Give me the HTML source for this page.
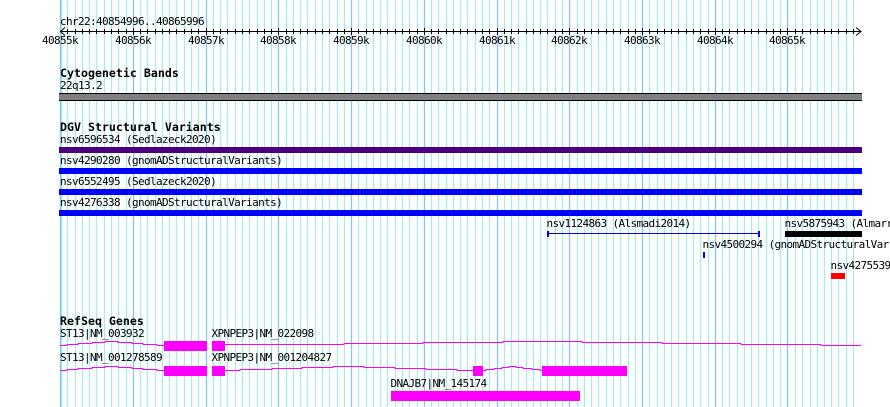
<!DOCTYPE html>
<html>
<head>
<meta charset="utf-8">
<style>
html,body{margin:0;padding:0;background:#fff;width:890px;height:407px;overflow:hidden}
svg{display:block}
text{font-family:"DejaVu Sans Mono","Liberation Mono",monospace;font-size:11px;letter-spacing:-0.62px;fill:#000;white-space:pre}
text.b{font-weight:bold;font-size:11.62px;letter-spacing:0}
</style>
</head>
<body>
<svg width="890" height="407" viewBox="0 0 890 407" xmlns="http://www.w3.org/2000/svg">
<g fill="none" stroke-width="1.3">
<path stroke="#a8ecec" d="M61.5 0V407M67.5 0V407M75.5 0V407M82.5 0V407M89.5 0V407M96.5 0V407M104.5 0V407M111.5 0V407M118.5 0V407M126.5 0V407M140.5 0V407M147.5 0V407M155.5 0V407M162.5 0V407M169.5 0V407M176.5 0V407M184.5 0V407M191.5 0V407M198.5 0V407M213.5 0V407M220.5 0V407M227.5 0V407M235.5 0V407M242.5 0V407M249.5 0V407M257.5 0V407M264.5 0V407M271.5 0V407M286.5 0V407M293.5 0V407M300.5 0V407M307.5 0V407M315.5 0V407M322.5 0V407M329.5 0V407M337.5 0V407M344.5 0V407M358.5 0V407M366.5 0V407M373.5 0V407M380.5 0V407M387.5 0V407M395.5 0V407M402.5 0V407M409.5 0V407M417.5 0V407M431.5 0V407M438.5 0V407M446.5 0V407M453.5 0V407M460.5 0V407M467.5 0V407M475.5 0V407M482.5 0V407M489.5 0V407M504.5 0V407M511.5 0V407M518.5 0V407M526.5 0V407M533.5 0V407M540.5 0V407M547.5 0V407M555.5 0V407M562.5 0V407M577.5 0V407M584.5 0V407M591.5 0V407M598.5 0V407M606.5 0V407M613.5 0V407M620.5 0V407M628.5 0V407M635.5 0V407M649.5 0V407M657.5 0V407M664.5 0V407M671.5 0V407M678.5 0V407M686.5 0V407M693.5 0V407M700.5 0V407M708.5 0V407M722.5 0V407M729.5 0V407M737.5 0V407M744.5 0V407M751.5 0V407M758.5 0V407M766.5 0V407M773.5 0V407M780.5 0V407M795.5 0V407M802.5 0V407M810.5 0V407M817.5 0V407M824.5 0V407M831.5 0V407M838.5 0V407M846.5 0V407M853.5 0V407"/>
<path stroke="#82c8f2" d="M60.5 0V407M133.5 0V407M206.5 0V407M278.5 0V407M351.5 0V407M424.5 0V407M497.5 0V407M569.5 0V407M642.5 0V407M715.5 0V407M787.5 0V407"/>
</g>
<g shape-rendering="crispEdges" fill="none">
<!-- ruler -->
<path stroke="#000" d="M60 31.5H861M67.5 29V34M75.5 29V34M82.5 29V34M89.5 29V34M96.5 29V34M104.5 29V34M111.5 29V34M118.5 29V34M126.5 29V34M133.5 28V35M140.5 29V34M147.5 29V34M155.5 29V34M162.5 29V34M169.5 29V34M176.5 29V34M184.5 29V34M191.5 29V34M198.5 29V34M206.5 28V35M213.5 29V34M220.5 29V34M227.5 29V34M235.5 29V34M242.5 29V34M249.5 29V34M257.5 29V34M264.5 29V34M271.5 29V34M278.5 28V35M286.5 29V34M293.5 29V34M300.5 29V34M307.5 29V34M315.5 29V34M322.5 29V34M329.5 29V34M337.5 29V34M344.5 29V34M351.5 28V35M358.5 29V34M366.5 29V34M373.5 29V34M380.5 29V34M387.5 29V34M395.5 29V34M402.5 29V34M409.5 29V34M417.5 29V34M424.5 28V35M431.5 29V34M438.5 29V34M446.5 29V34M453.5 29V34M460.5 29V34M467.5 29V34M475.5 29V34M482.5 29V34M489.5 29V34M497.5 28V35M504.5 29V34M511.5 29V34M518.5 29V34M526.5 29V34M533.5 29V34M540.5 29V34M547.5 29V34M555.5 29V34M562.5 29V34M569.5 28V35M577.5 29V34M584.5 29V34M591.5 29V34M598.5 29V34M606.5 29V34M613.5 29V34M620.5 29V34M628.5 29V34M635.5 29V34M642.5 28V35M649.5 29V34M657.5 29V34M664.5 29V34M671.5 29V34M678.5 29V34M686.5 29V34M693.5 29V34M700.5 29V34M708.5 29V34M715.5 28V35M722.5 29V34M729.5 29V34M737.5 29V34M744.5 29V34M751.5 29V34M758.5 29V34M766.5 29V34M773.5 29V34M780.5 29V34M787.5 28V35M795.5 29V34M802.5 29V34M810.5 29V34M817.5 29V34M824.5 29V34M831.5 29V34M838.5 29V34M846.5 29V34M853.5 29V34"/>
</g>
<path d="M65 27.5L60.5 31.5L65 35.5M856 27.5L861 31.5L856 35.5" fill="none" stroke="#000"/>

<g text-anchor="middle">
<text x="60" y="44">40855k</text>
<text x="133" y="44">40856k</text>
<text x="206" y="44">40857k</text>
<text x="278" y="44">40858k</text>
<text x="351" y="44">40859k</text>
<text x="424" y="44">40860k</text>
<text x="497" y="44">40861k</text>
<text x="569" y="44">40862k</text>
<text x="642" y="44">40863k</text>
<text x="715" y="44">40864k</text>
<text x="787" y="44">40865k</text>
</g>
<text x="60" y="25">chr22:40854996..40865996</text>

<text class="b" x="60" y="77">Cytogenetic Bands</text>
<text x="60" y="89">22q13.2</text>

<text class="b" x="60" y="131">DGV Structural Variants</text>
<text x="60" y="143">nsv6596534 (Sedlazeck2020)</text>
<text x="60" y="164">nsv4290280 (gnomADStructuralVariants)</text>
<text x="60" y="185">nsv6552495 (Sedlazeck2020)</text>
<text x="60" y="206">nsv4276338 (gnomADStructuralVariants)</text>
<text x="546.5" y="227">nsv1124863 (Alsmadi2014)</text>
<text x="784.5" y="227">nsv5875943 (Almarr</text>
<text x="702.5" y="248">nsv4500294 (gnomADStructuralVar</text>
<text x="830.5" y="269">nsv4275539</text>

<text class="b" x="60" y="325">RefSeq Genes</text>
<text x="60" y="337">ST13|NM_003932</text>
<text x="211.5" y="337">XPNPEP3|NM_022098</text>
<text x="60" y="361">ST13|NM_001278589</text>
<text x="211.5" y="361">XPNPEP3|NM_001204827</text>
<text x="390.5" y="387">DNAJB7|NM_145174</text>

<g shape-rendering="crispEdges">
<!-- cytoband -->
<rect x="59" y="93" width="803" height="8" fill="#000"/>
<rect x="59" y="94" width="803" height="6" fill="#808080"/>
<!-- DGV bars -->
<rect x="59" y="147" width="803" height="6" fill="#4b0082"/>
<rect x="59" y="168" width="803" height="6" fill="#0000ff"/>
<rect x="59" y="189" width="803" height="6" fill="#0000ff"/>
<rect x="59" y="210" width="803" height="6" fill="#0000ff"/>
<rect x="547" y="233" width="213" height="1" fill="#0000ff"/>
<rect x="547" y="231" width="2" height="6" fill="#0000ff"/>
<rect x="758" y="231" width="2" height="6" fill="#0000ff"/>
<rect x="785" y="231" width="77" height="6" fill="#000"/>
<rect x="703" y="252" width="2" height="6" fill="#0000ff"/>
<rect x="831" y="273" width="14" height="6" fill="#ff0000"/>
<!-- gene exons -->
<g fill="#ff00ff">
<rect x="164" y="341" width="43" height="10"/>
<rect x="212" y="341" width="13" height="10"/>
<rect x="164" y="366" width="43" height="10"/>
<rect x="212" y="366" width="13" height="10"/>
<rect x="473" y="366" width="10" height="10"/>
<rect x="542" y="366" width="85" height="10"/>
<rect x="391" y="391" width="189" height="10"/>
</g>
<!-- gene introns -->
<path fill="none" stroke="#ff00ff" d="M60 345.5H67V344.5H78V343.5H92V342.5H105V341.5H118V342.5H132V343.5H143V344.5H157V345.5H164"/>
<path fill="none" stroke="#ff00ff" d="M225 344.5H344V343.5H423V342.5H503V341.5H582V342.5H662V343.5H741V344.5H821V345.5H861"/>
<path fill="none" stroke="#ff00ff" d="M60 370.5H67V369.5H78V368.5H92V367.5H105V366.5H118V367.5H132V368.5H143V369.5H157V370.5H164"/>
<path fill="none" stroke="#ff00ff" d="M225 370.5H240V369.5H272V368.5H302V367.5H333V366.5H364V367.5H395V368.5H426V369.5H457V370.5H473"/>
<path fill="none" stroke="#ff00ff" d="M483 370.5H486V369.5H494V368.5H502V367.5H509V366.5H516V367.5H523V368.5H532V369.5H540V370.5H542"/>
</g>
</svg>
</body>
</html>
